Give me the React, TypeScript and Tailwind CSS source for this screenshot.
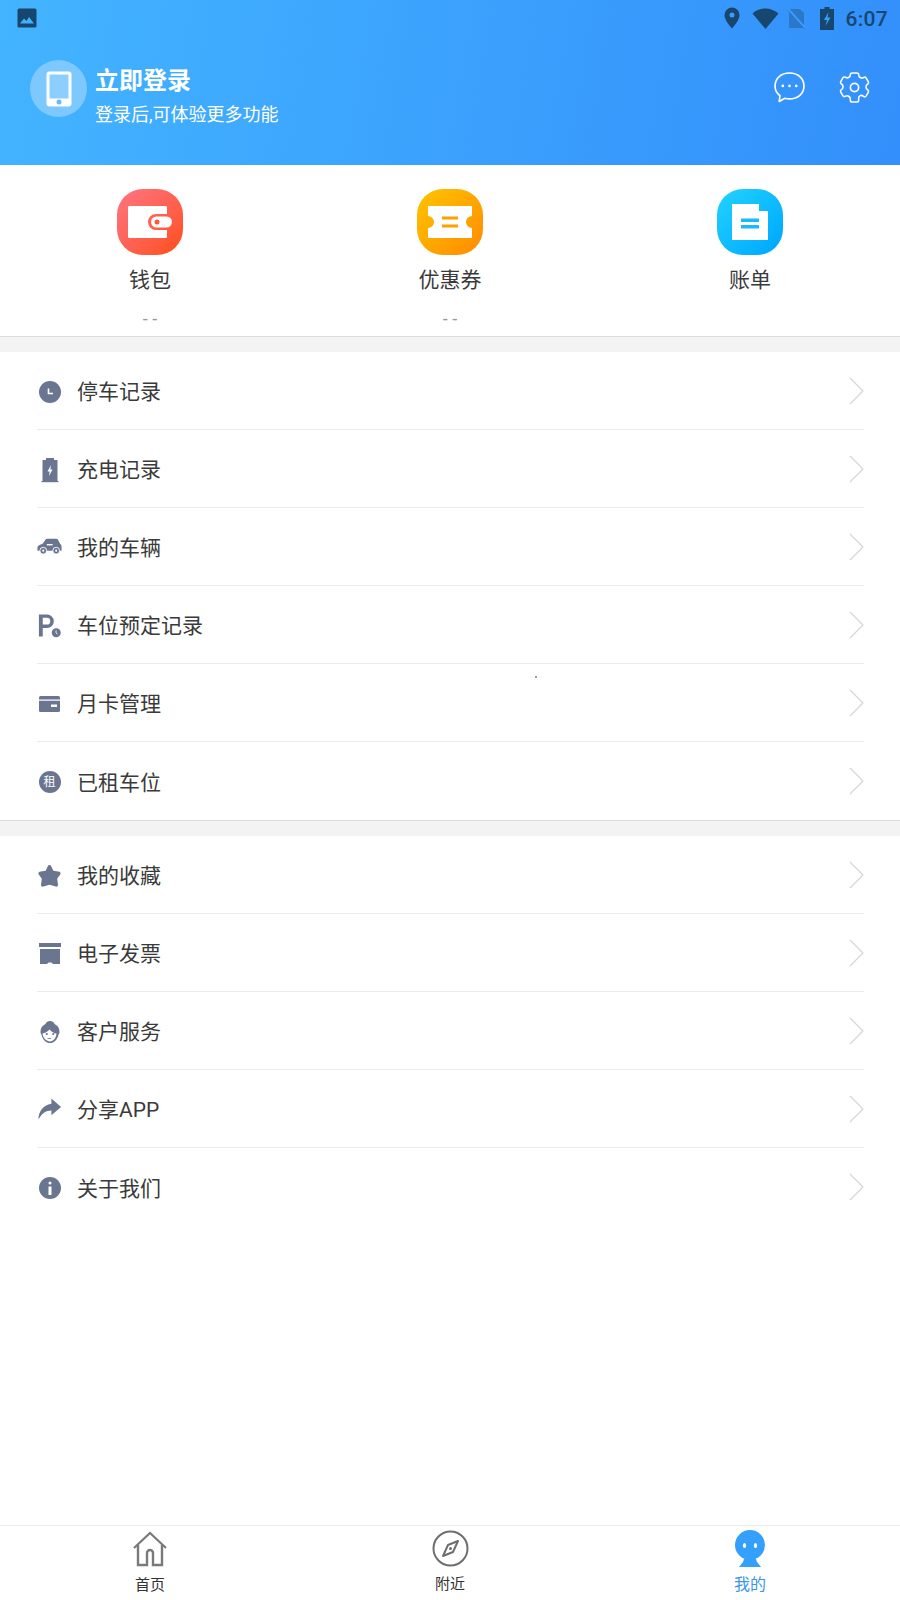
const slate = '#6a7690'

function ClockIcon() {
    return (
        <svg width="24" height="24" viewBox="0 0 24 24">
            <circle cx="12" cy="12" r="11" fill={slate} />
            <path d="M10.500 8.500v5h4.500" fill="none" stroke="#fff" strokeWidth="1.600" />
        </svg>
    )
}

function BatteryIcon() {
    return (
        <svg width="24" height="26" viewBox="0 0 24 26">
            <path d="M8 1h8v2h3.500v21h-15V3H8z" fill={slate} />
            <path d="M3.500 24h17v1.200h-17z" fill={slate} />
            <path d="M13 8l-3.500 6.500h2.200L11 19l3.500-6.500h-2.200z" fill="#fff" />
        </svg>
    )
}

function CarIcon() {
    return (
        <svg width="28" height="20" viewBox="0 2 28 20">
            <path d="M0.500 11.500c0-2 3-3.400 5.500-4L9.500 2.700c.5-.7 1-1 2-1h10c1 0 1.700.4 2.200 1.200L26 7.500c1 .5 1.500 1.500 1.500 3v4.500H.5z" fill={slate} />
            <circle cx="7" cy="15" r="3.800" fill={slate} stroke="#fff" strokeWidth="1" />
            <circle cx="21.500" cy="15" r="3.800" fill={slate} stroke="#fff" strokeWidth="1" />
            <circle cx="7" cy="15" r="1.200" fill="#fff" />
            <circle cx="21.500" cy="15" r="1.200" fill="#fff" />
            <path d="M11 7.500h6.500v1.600H11z" fill="#fff" />
        </svg>
    )
}

function ParkingIcon() {
    return (
        <svg width="26" height="26" viewBox="0 0 26 26">
            <path d="M2 1h8.500a7 7 0 0 1 0 14H6v9H2zM6 4.500v7h4.300a3.500 3.500 0 0 0 0-7z" fill={slate} fillRule="evenodd" />
            <circle cx="20" cy="20" r="4.700" fill={slate} />
            <path d="M19.800 17.500v2.700l1.600 1.300" fill="none" stroke="#fff" strokeWidth="0.800" />
        </svg>
    )
}

function CardIcon() {
    return (
        <svg width="24" height="18" viewBox="0 0 24 18">
            <rect x="1" y="1" width="21" height="16" rx="1.500" fill={slate} />
            <path d="M1 4.500h21v1.300H1zM13 9.500h6v2.600h-6z" fill="#fff" />
        </svg>
    )
}

function RentIcon() {
    return (
        <div className="flex h-[22px] w-[22px] items-center justify-center rounded-full bg-[#6a7690] text-[12px] leading-none text-white">
            租
        </div>
    )
}

function StarIcon() {
    return (
        <svg width="26" height="26" viewBox="0 0 26 26">
            <path d="M13 1.500c1 0 1.500.7 2 1.800l2 4.200 5 .7c2 .3 3 1.300 2.500 2.700l-3.500 5 .8 6c.2 1.800-.8 2.600-2.300 2.100L13 22.200 6.500 24c-1.500.5-2.500-.3-2.300-2.100l.8-6-3.500-5C1 9.500 2 8.500 4 8.200l5-.7 2-4.200c.5-1.100 1-1.800 2-1.800z" fill={slate} />
        </svg>
    )
}

function BoxIcon() {
    return (
        <svg width="24" height="22" viewBox="0 0 24 22">
            <path d="M1 0h22v4H1zM2 6h20v15H15l-1.500-1.500h-3L9 21H2z" fill={slate} />
        </svg>
    )
}

function AgentIcon() {
    return (
        <svg width="24" height="24" viewBox="0 0 24 24">
            <path d="M12 1c2.500 0 4 1.400 4.500 3 2.800 1.200 5 3.700 5 7.500 0 1.500-.4 2.500-1 3.200C19.500 19.500 16 23 12 23s-7.500-3.500-8.500-8.300c-.6-.7-1-1.700-1-3.200 0-3.800 2.200-6.300 5-7.500C8 2.400 9.500 1 12 1z" fill={slate} />
            <path d="M4.500 13.500c2.500-.2 5-1.800 7-4 1.800 2.400 4.500 3.800 7 4-.4 4.500-3 7.900-6.500 7.900s-7-3.400-7.500-7.900z" fill="#fff" />
            <circle cx="8.800" cy="14" r="1.100" fill={slate} />
            <circle cx="15.200" cy="14" r="1.100" fill={slate} />
            <path d="M9.500 18.500h3.500" stroke={slate} strokeWidth="0.800" />
        </svg>
    )
}

function ShareIcon() {
    return (
        <svg width="26" height="24" viewBox="0 1 26 24">
            <path d="M15 1l10 9-10 8.500v-5c-6 0-10 3-13.500 9.500 0-8 4.500-15 13.500-16.500z" fill={slate} />
        </svg>
    )
}

function InfoIcon() {
    return (
        <svg width="24" height="24" viewBox="0 0 24 24">
            <circle cx="12" cy="12" r="11" fill={slate} />
            <circle cx="12" cy="7" r="1.500" fill="#fff" />
            <path d="M10.500 10.500h3V19h-3z" fill="#fff" />
        </svg>
    )
}

function Chevron() {
    return (
        <svg width="15" height="28" viewBox="0 0 15 28" className="shrink-0">
            <path d="M1 1l13 13L1 27" fill="none" stroke="#d4d4d4" strokeWidth="1.100" />
        </svg>
    )
}

function StatusBar() {
    return (
        <div className="flex h-[36px] items-center justify-between pl-[17px] pr-[12px] text-[#17466e]">
            <svg width="20" height="20" viewBox="0 0 20 20">
                <rect x="0.500" y="0.500" width="19" height="19" rx="1.500" fill="#17466e" />
                <path d="M3 15.500l4-5 2.500 2.500 2.500-4 5 6.500z" fill="#41b0ff" />
            </svg>
            <div className="flex items-center">
                <svg width="16" height="22" viewBox="0 0 16 22" className="mr-[12px]">
                    <path d="M8 0.500a7.500 7.500 0 0 1 7.500 7.500c0 5-5 10.500-7.500 13.500C5.500 18.500.5 13 .5 8A7.500 7.500 0 0 1 8 .5z" fill="#17466e" />
                    <circle cx="8" cy="8" r="2.500" fill="#3a9dfd" />
                </svg>
                <svg width="27" height="21" viewBox="0 0 27 21" className="mr-[8px]">
                    <path d="M13.500 21L0.500 5.500C4 2.500 8.500.5 13.500.5s9.500 2 13 5z" fill="#17466e" />
                </svg>
                <svg width="19" height="21" viewBox="0 0 19 21" className="mr-[14px]">
                    <path d="M2 1h11l4 4v15H2z" fill="#2c78c8" />
                    <path d="M1 1l17 19" stroke="#3a9dfd" strokeWidth="2.500" />
                    <path d="M0.500 2l17 19" stroke="#2c78c8" strokeWidth="1" />
                </svg>
                <svg width="14" height="23" viewBox="0 0 14 23" className="mr-[11px]">
                    <path d="M4.500 0h5v2H14v21H0V2h4.500z" fill="#17466e" />
                    <path d="M8.500 5L4 13h3l-1.500 6L10.500 10.500h-3z" fill="#3a9dfd" />
                </svg>
                <span className="pt-[2px] text-[21px] leading-none font-medium tracking-[0.3px]">6:07</span>
            </div>
        </div>
    )
}

function Header() {
    return (
        <div className="h-[165px] shrink-0 bg-linear-[100deg,#43b4ff,#338ffb]">
            <StatusBar />
            <div className="flex items-start justify-between pl-[30px] pr-[30px] pt-[24px]">
                <div className="flex items-start">
                    <div className="relative flex h-[57px] w-[57px] items-center justify-center rounded-full bg-[#7cc8ff]">
                        <svg width="26" height="36" viewBox="0 0 26 36">
                            <rect x="0.500" y="0.500" width="25" height="35" rx="3" fill="#fff" />
                            <rect x="3.500" y="3.500" width="19" height="24" fill="#8ccfff" />
                            <circle cx="13" cy="31" r="2.500" fill="#64bbfd" />
                        </svg>
                    </div>
                    <div className="ml-[8px] pt-[3px] text-white">
                        <div className="text-[24px] leading-[36px] font-bold">立即登录</div>
                        <div className="mt-[1px] text-[18px] leading-[30px]">登录后,可体验更多功能</div>
                    </div>
                </div>
                <div className="flex items-center gap-[34px] pt-[12px]">
                    <svg width="31" height="31" viewBox="0 0 30 30">
                        <path d="M15 1c8 0 14 5 14 12.500S23 26 15 26c-1.500 0-3-.2-4.500-.6L5 28.500l.8-5.500C3 20.800 1 17.500 1 13.500 1 6 7 1 15 1z" fill="none" stroke="#fff" strokeWidth="1.600" strokeLinejoin="round" />
                        <circle cx="8.500" cy="13.500" r="1.300" fill="#fff" />
                        <circle cx="15" cy="13.500" r="1.300" fill="#fff" />
                        <circle cx="21.500" cy="13.500" r="1.300" fill="#fff" />
                    </svg>
                    <svg width="31" height="31" viewBox="0 0 30 30">
                        <path d="M11 2.500c0-1 1-1.500 2-1.500h4c1 0 2 .5 2 1.500 0 2.500 2.500 4 4.800 2.800.9-.5 2-.2 2.500.6l2 3.500c.5.9.2 1.900-.7 2.400-2 1.200-2 4.200 0 5.400.9.500 1.200 1.500.7 2.400l-2 3.500c-.5.800-1.600 1.100-2.500.6C21.500 21.500 19 23 19 25.500v2c0 1-1 1.500-2 1.500h-4c-1 0-2-.5-2-1.500v-1c0-2.800-2.500-4.300-4.800-3-.9.500-2 .2-2.500-.6l-2-3.500c-.5-.9-.2-1.900.7-2.400 2-1.200 2-4.200 0-5.400-.9-.5-1.200-1.500-.7-2.400l2-3.500c.5-.8 1.600-1.100 2.500-.6C8.500 6.500 11 5 11 2.500z" fill="none" stroke="#fff" strokeWidth="1.500" strokeLinejoin="round" />
                        <circle cx="15" cy="15" r="4" fill="none" stroke="#fff" strokeWidth="1.600" />
                    </svg>
                </div>
            </div>
        </div>
    )
}

const shortcuts = [
    {
        label: '钱包',
        sub: '- -',
        bg: 'bg-linear-to-br from-[#ff7480] to-[#ff4d00]',
        icon: (
            <svg width="44" height="32" viewBox="0 0 44 32">
                <path d="M1.500 0h36c1 0 1.500.5 1.500 1.500V8H28a8 8 0 0 0 0 16h11v6.500c0 1-.5 1.500-1.500 1.500h-36C.5 32 0 31.500 0 30.500v-29C0 .5.500 0 1.500 0z" fill="#fff" />
                <rect x="23" y="10.500" width="21" height="11" rx="5.500" fill="#fff" />
                <circle cx="29" cy="16" r="2.500" fill="#ff5a3a" />
            </svg>
        ),
    },
    {
        label: '优惠券',
        sub: '- -',
        bg: 'bg-linear-to-br from-[#ffc400] to-[#ff8a00]',
        icon: (
            <svg width="44" height="32" viewBox="0 0 44 32">
                <path d="M0 0h44v10a6 6 0 0 0 0 12v10H0V22a6 6 0 0 0 0-12z" fill="#fff" />
                <path d="M14 10.500h16v3H14zM14 18.500h16v3H14z" fill="#ffa000" />
            </svg>
        ),
    },
    {
        label: '账单',
        sub: '',
        bg: 'bg-linear-to-br from-[#22d3fe] to-[#00a5ff]',
        icon: (
            <svg width="38" height="36" viewBox="0 0 38 36">
                <path d="M1 0h27v7h9v29H1z" fill="#fff" />
                <path d="M10 14.500h18v3.500H10zM10 21h18v3.500H10z" fill="#1cb8fe" />
            </svg>
        ),
    },
]

function Shortcuts() {
    return (
        <div className="grid h-[172px] shrink-0 grid-cols-3 border-b border-[#dcdcdc] pt-[24px]">
            {shortcuts.map((s) => (
                <div key={s.label} className="flex flex-col items-center">
                    <div className={`flex h-[66px] w-[66px] items-center justify-center rounded-[26px] ${s.bg}`}>
                        {s.icon}
                    </div>
                    <div className="mt-[9px] text-[21px] leading-[32px] text-[#3a3a3a]">{s.label}</div>
                    <div className="mt-[11px] h-[24px] text-[18px] leading-[24px] text-[#9a9a9a]">{s.sub}</div>
                </div>
            ))}
        </div>
    )
}

function MenuRow({ icon, label, last }: { icon: React.ReactNode; label: string; last?: boolean }) {
    return (
        <div className={`ml-[37px] mr-[36px] flex h-[78px] items-center justify-between ${last ? '' : 'border-b border-[#ebebeb]'}`}>
            <div className="flex items-center">
                <div className="flex w-[40px] justify-center pr-[15px] pt-[2px]">{icon}</div>
                <span className="pt-[4px] text-[21px] leading-none text-[#3a3a3a]">{label}</span>
            </div>
            <Chevron />
        </div>
    )
}

const group1 = [
    { label: '停车记录', icon: <ClockIcon /> },
    { label: '充电记录', icon: <BatteryIcon /> },
    { label: '我的车辆', icon: <CarIcon /> },
    { label: '车位预定记录', icon: <ParkingIcon /> },
    { label: '月卡管理', icon: <CardIcon /> },
    { label: '已租车位', icon: <RentIcon /> },
]

const group2 = [
    { label: '我的收藏', icon: <StarIcon /> },
    { label: '电子发票', icon: <BoxIcon /> },
    { label: '客户服务', icon: <AgentIcon /> },
    { label: '分享APP', icon: <ShareIcon /> },
    { label: '关于我们', icon: <InfoIcon /> },
]

function BottomNav() {
    return (
        <div className="grid h-[75px] shrink-0 grid-cols-3 border-t border-[#ebebeb]">
            <div className="flex flex-col items-center pt-[5px]">
                <svg width="36" height="36" viewBox="0 0 36 36">
                    <path d="M2 17L18 2l16 15" fill="none" stroke="#7a7a7a" strokeWidth="2.200" />
                    <path d="M6 14v20h9V22a3 3 0 0 1 6 0v12h9V14" fill="none" stroke="#7a7a7a" strokeWidth="2.400" />
                </svg>
                <span className="mt-[6px] text-[15px] leading-[24px] text-[#333]">首页</span>
            </div>
            <div className="flex flex-col items-center pt-[4px]">
                <svg width="37" height="37" viewBox="0 0 37 37">
                    <circle cx="18.500" cy="18.500" r="17" fill="none" stroke="#6e6e6e" strokeWidth="2" />
                    <path d="M26 11l-10 4-5 11 10-4z" fill="none" stroke="#6e6e6e" strokeWidth="2" strokeLinejoin="round" />
                    <circle cx="18.500" cy="18.500" r="1.500" fill="#6e6e6e" />
                </svg>
                <span className="mt-[5px] text-[15px] leading-[24px] text-[#333]">附近</span>
            </div>
            <div className="flex flex-col items-center pt-[4px]">
                <svg width="32" height="37" viewBox="0 0 32 37">
                    <ellipse cx="16" cy="15" rx="15" ry="15" fill="#35a0fc" />
                    <path d="M10 29h12l1 3 4 5H5l4-5z" fill="#35a0fc" />
                    <ellipse cx="10.500" cy="15.500" rx="1.600" ry="2.600" fill="#fff" />
                    <ellipse cx="21.500" cy="15.500" rx="1.600" ry="2.600" fill="#fff" />
                </svg>
                <span className="mt-[6px] text-[16px] leading-[24px] text-[#3b96ea]">我的</span>
            </div>
        </div>
    )
}

export default function App() {
    return (
        <div className="flex h-[1600px] w-[900px] flex-col overflow-hidden bg-white font-['Roboto','Noto_Sans_CJK_SC',sans-serif]">
            <Header />
            <Shortcuts />
            <div className="h-[15px] shrink-0 bg-[#f3f3f3]" />
            <div className="relative shrink-0">
                {group1.map((row) => (
                    <MenuRow key={row.label} icon={row.icon} label={row.label} last={row.label === '已租车位'} />
                ))}
                <div className="absolute left-[535px] top-[324px] h-[2px] w-[2px] rounded-full bg-[#777]" />
            </div>
            <div className="h-[16px] shrink-0 border-t border-[#dcdcdc] bg-[#f3f3f3]" />
            <div className="shrink-0">
                {group2.map((row) => (
                    <MenuRow key={row.label} icon={row.icon} label={row.label} last={row.label === '关于我们'} />
                ))}
            </div>
            <div className="flex-1" />
            <BottomNav />
        </div>
    )
}
